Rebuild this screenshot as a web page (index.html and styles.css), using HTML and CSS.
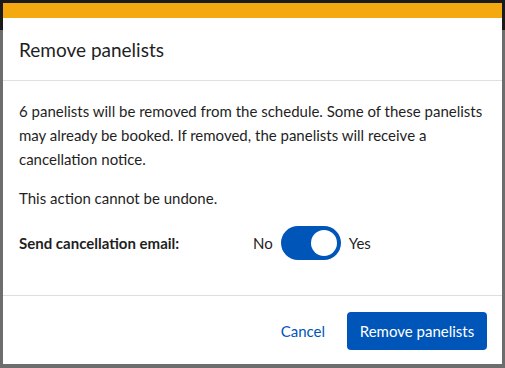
FILE: index.html
```html
<!DOCTYPE html>
<html lang="en">
<head>
<meta charset="utf-8">
<title>Remove panelists</title>
<link rel="stylesheet" href="styles.css">
</head>
<body>
<div class="dialog" role="dialog" aria-labelledby="dlg-title">
  <div class="accent"></div>
  <header class="dialog-header">
    <h2 id="dlg-title" class="dialog-title">Remove panelists</h2>
  </header>
  <div class="dialog-body">
    <p class="msg">6 panelists will be removed from the schedule. Some of these panelists may already be booked. If removed, the panelists will receive a cancellation notice.</p>
    <p class="msg">This action cannot be undone.</p>
    <div class="toggle-row">
      <span class="toggle-label">Send cancellation email:</span>
      <div class="toggle-group">
        <span class="toggle-opt">No</span>
        <span class="switch" role="switch" aria-checked="true"><span class="knob"></span></span>
        <span class="toggle-opt">Yes</span>
      </div>
    </div>
  </div>
  <footer class="dialog-footer">
    <button class="btn-link" type="button">Cancel</button>
    <button class="btn-primary" type="button">Remove panelists</button>
  </footer>
</div>
</body>
</html>
```

FILE: styles.css
```css
* { box-sizing: border-box; }
html, body { height: 100%; }
body {
  margin: 0;
  padding: 3px 3px 4px 3px;
  background: linear-gradient(#1b1b1b 0, #1b1b1b 30px, #6d6d6d 30px, #6d6d6d 100%);
  font-family: Lato, "Open Sans", "Liberation Sans", sans-serif;
  color: #1f1f1f;
}
.dialog {
  width: 499px;
  height: 361px;
  background: #fff;
  display: flex;
  flex-direction: column;
}
.accent {
  height: 15px;
  background: #f4a911;
  flex: none;
}
.dialog-header {
  height: 63px;
  display: flex;
  align-items: center;
  padding: 0 16px;
  border-bottom: 1px solid #dde1e6;
}
.dialog-title {
  margin: 0;
  font-size: 19px;
  font-weight: 400;
  color: #1f1f1f;
}
.dialog-body {
  padding: 18px 16px 0 16px;
  height: 215px;
  border-bottom: 1px solid #dedede;
}
.msg {
  margin: 0 0 15px 0;
  font-size: 15px;
  line-height: 24px;
}
.toggle-row {
  display: flex;
  align-items: center;
  margin-top: 16px;
}
.toggle-label {
  font-weight: 700;
  font-size: 15px;
  width: 234px;
}
.toggle-group {
  display: flex;
  align-items: center;
  gap: 8px;
  font-size: 15px;
}
.switch {
  width: 60px;
  height: 34px;
  border-radius: 17px;
  background: #0055b8;
  display: flex;
  align-items: center;
  justify-content: flex-end;
  padding-right: 4px;
}
.knob {
  width: 26px;
  height: 26px;
  border-radius: 50%;
  background: #fff;
}
.dialog-footer {
  flex: 1;
  display: flex;
  align-items: center;
  justify-content: flex-end;
  padding: 2px 15px 0 16px;
  gap: 22px;
}
.btn-link {
  background: none;
  border: 0;
  padding: 0;
  font: inherit;
  font-size: 15px;
  color: #0055b8;
}
.btn-primary {
  height: 38px;
  width: 140px;
  border: 0;
  border-radius: 4px;
  background: #0055b8;
  color: #fff;
  font: inherit;
  font-size: 15px;
}
```
